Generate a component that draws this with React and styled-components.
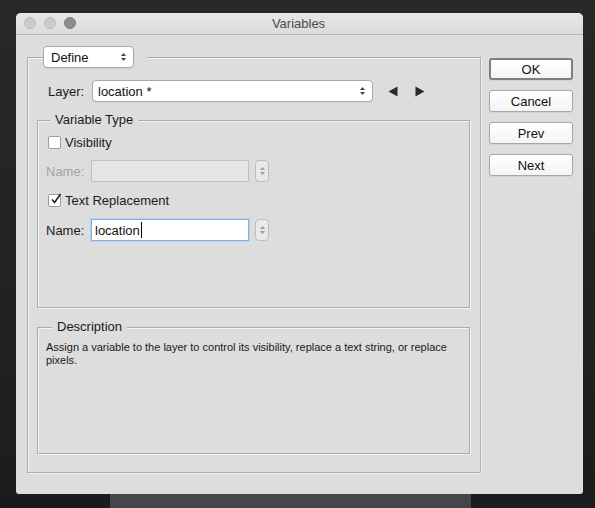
import React from "react";
import styled, { createGlobalStyle } from "styled-components";

const Global = createGlobalStyle`
  html, body { margin: 0; padding: 0; background: #252525; }
  body { font-family: "Liberation Sans", Arial, sans-serif; font-size: 13px; color: #1a1a1a; }
  * { box-sizing: border-box; }
`;

const Screen = styled.div`
  width: 595px;
  height: 508px;
  display: flex;
  flex-direction: column;
  background: linear-gradient(#282828, #222 60%, #1c1c1c);
  padding-top: 13px;
  overflow: hidden;
`;

const WindowRow = styled.div`
  display: flex;
  padding-left: 16px;
`;

const Win = styled.div`
  width: 567px;
  height: 481px;
  background: #dddddd;
  border-radius: 5px 5px 3px 3px;
  display: flex;
  flex-direction: column;
  overflow: hidden;
`;

const TitleBar = styled.div`
  height: 22px;
  flex: none;
  position: relative;
  display: flex;
  align-items: center;
  justify-content: center;
  border-bottom: 1px solid #b7b7b7;
  background: linear-gradient(#e6e6e6, #dcdcdc);
`;

const Lights = styled.div`
  position: absolute;
  left: 8px;
  top: 4px;
  display: flex;
  gap: 8px;
`;

const Light = styled.span`
  width: 12px;
  height: 12px;
  border-radius: 50%;
  background: ${(p) => (p.$dark ? "#8c8c8c" : "#cbcbcb")};
  border: 1px solid ${(p) => (p.$dark ? "#7d7d7d" : "#bdbdbd")};
`;

const Title = styled.div`
  font-size: 13px;
  color: #4a4a4a;
  margin-right: 2px;
`;

const Body = styled.div`
  display: flex;
  align-items: flex-start;
  padding: 22px 10px 0 11px;
  gap: 8px;
`;

const Group = styled.div`
  position: relative;
  border: 1px solid #ababab;
  box-shadow: inset 1px 1px 0 #f3f3f3, 1px 1px 0 #f3f3f3;
  width: ${(p) => p.$w}px;
  height: ${(p) => p.$h}px;
  padding: ${(p) => p.$pad || "0"};
  display: flex;
  flex-direction: column;
`;

const Legend = styled.div`
  position: absolute;
  left: ${(p) => p.$left}px;
  top: -9px;
  padding: 0 5px;
  background: #dddddd;
  font-size: 13px;
  line-height: 16px;
  color: #1a1a1a;
`;

const PopupWrap = styled.div`
  position: absolute;
  left: 15px;
  top: -12px;
  background: #dddddd;
  width: 104px;
  display: flex;
`;

const Popup = styled.div`
  width: ${(p) => p.$w}px;
  height: 22px;
  background: #ffffff;
  border: 1px solid #a9a9a9;
  border-radius: 4px;
  display: flex;
  align-items: center;
  justify-content: space-between;
  padding: 0 6px 0 ${(p) => p.$pl || 7}px;
  font-size: 13px;
  color: #111;
  box-shadow: 0 1px 0 rgba(0, 0, 0, 0.05);
`;

const Updown = ({ color = "#444" }) => (
  <svg width="7" height="10" viewBox="0 0 7 10">
    <path d="M3.5 1 L6 4 H1 Z" fill={color} />
    <path d="M3.5 9 L6 6 H1 Z" fill={color} />
  </svg>
);

const LayerRow = styled.div`
  display: flex;
  align-items: center;
  height: 22px;
  padding-left: 11px;
  margin-bottom: 18px;
`;

const Label = styled.span`
  font-size: 13px;
  color: ${(p) => (p.$disabled ? "#a3a3a3" : "#1a1a1a")};
  width: ${(p) => p.$w}px;
  flex: none;
`;

const Arrows = styled.div`
  display: flex;
  gap: 17px;
  margin-left: 15px;
`;

const Rows = styled.div`
  display: flex;
  flex-direction: column;
  padding: 13px 0 0 8px;
`;

const CheckRow = styled.label`
  display: flex;
  align-items: center;
  height: 16px;
  padding-left: 2px;
  margin-bottom: ${(p) => p.$mb}px;
  font-size: 13px;
`;

const Box = styled.span`
  width: 13px;
  height: 13px;
  background: #fff;
  border: 1px solid #9d9d9d;
  border-radius: 2px;
  margin-right: 4px;
  position: relative;
  display: flex;
  align-items: center;
  justify-content: center;
`;

const NameRow = styled.div`
  display: flex;
  align-items: center;
  height: 22px;
  margin-bottom: ${(p) => p.$mb}px;
`;

const Field = styled.div`
  width: 158px;
  height: 22px;
  display: flex;
  align-items: center;
  padding-left: 3px;
  font-size: 13px;
  color: #111;
  background: ${(p) => (p.$disabled ? "#e5e5e5" : "#ffffff")};
  border: 1px solid ${(p) => (p.$focus ? "#86aedb" : "#c1c1c1")};
  box-shadow: ${(p) => (p.$focus ? "0 0 0 1px #b8d1ee" : "none")};
`;

const Caret = styled.span`
  width: 1px;
  height: 16px;
  background: #000;
  margin-left: 1px;
`;

const Stepper = styled.div`
  width: 14px;
  height: 22px;
  margin-left: 6px;
  border: 1px solid #bdbdbd;
  border-radius: 4px;
  background: #e9e9e9;
  display: flex;
  align-items: center;
  justify-content: center;
`;

const Spacer = styled.div`
  height: ${(p) => p.$h}px;
  flex: none;
`;

const DescText = styled.p`
  margin: 0;
  padding: 13px 12px 0 8px;
  font-size: 11px;
  line-height: 13px;
  color: #1a1a1a;
`;

const Buttons = styled.div`
  display: flex;
  flex-direction: column;
  gap: 10px;
  margin-top: 1px;
`;

const Button = styled.button`
  width: 84px;
  height: 22px;
  padding: 0;
  font-family: "Liberation Sans", Arial, sans-serif;
  font-size: 13px;
  color: #111;
  background: linear-gradient(#ffffff, #f4f4f4);
  border: ${(p) => (p.$default ? "2px solid #7f7f7f" : "1px solid #a7a7a7")};
  border-radius: 3px;
  box-shadow: 0 1px 0 rgba(0, 0, 0, 0.06);
`;

const Strip = styled.div`
  display: flex;
  height: 14px;
`;

const StripPart = styled.div`
  width: ${(p) => p.$w}px;
  background: ${(p) => p.$c};
`;

const Tri = ({ dir }) => (
  <svg width="10" height="11" viewBox="0 0 10 11">
    {dir === "left" ? (
      <path d="M0.5 5.5 L9.5 0.5 V10.5 Z" fill="#2a2a2a" />
    ) : (
      <path d="M9.5 5.5 L0.5 0.5 V10.5 Z" fill="#2a2a2a" />
    )}
  </svg>
);

const CheckMark = styled.svg`
  position: absolute;
  left: 1px;
  top: -2px;
`;

const Check = () => (
  <CheckMark width="12" height="12" viewBox="0 0 12 12">
    <path d="M2 6.5 L4.6 9.5 L10.5 1" fill="none" stroke="#222" strokeWidth="1.6" />
  </CheckMark>
);

export default function App() {
  return (
    <>
      <Global />
      <Screen>
        <WindowRow>
          <Win>
            <TitleBar>
              <Lights>
                <Light />
                <Light />
                <Light $dark />
              </Lights>
              <Title>Variables</Title>
            </TitleBar>
            <Body>
              <Group $w={454} $h={416} $pad="22px 10px 0 9px">
                <PopupWrap>
                  <Popup $w={91}>
                    <span>Define</span>
                    <Updown />
                  </Popup>
                </PopupWrap>
                <LayerRow>
                  <Label $w={44}>Layer:</Label>
                  <Popup $w={281} $pl={5}>
                    <span>location *</span>
                    <Updown />
                  </Popup>
                  <Arrows>
                    <Tri dir="left" />
                    <Tri dir="right" />
                  </Arrows>
                </LayerRow>
                <Group $w={433} $h={188}>
                  <Legend $left={12}>Variable Type</Legend>
                  <Rows>
                    <CheckRow $mb={10}>
                      <Box />
                      Visibility
                    </CheckRow>
                    <NameRow $mb={10}>
                      <Label $w={45} $disabled>Name:</Label>
                      <Field $disabled />
                      <Stepper>
                        <Updown color="#9a9a9a" />
                      </Stepper>
                    </NameRow>
                    <CheckRow $mb={11}>
                      <Box>
                        <Check />
                      </Box>
                      Text Replacement
                    </CheckRow>
                    <NameRow $mb={0}>
                      <Label $w={45}>Name:</Label>
                      <Field $focus>
                        location
                        <Caret />
                      </Field>
                      <Stepper>
                        <Updown color="#9a9a9a" />
                      </Stepper>
                    </NameRow>
                  </Rows>
                </Group>
                <Spacer $h={19} />
                <Group $w={433} $h={127}>
                  <Legend $left={14}>Description</Legend>
                  <DescText>
                    Assign a variable to the layer to control its visibility, replace a text string, or replace
                    pixels.
                  </DescText>
                </Group>
              </Group>
              <Buttons>
                <Button $default>OK</Button>
                <Button>Cancel</Button>
                <Button>Prev</Button>
                <Button>Next</Button>
              </Buttons>
            </Body>
          </Win>
        </WindowRow>
        <Strip>
          <StripPart $w={110} $c="#1b1b1b" />
          <StripPart $w={361} $c="#45464c" />
          <StripPart $w={124} $c="#1c1c1c" />
        </Strip>
      </Screen>
    </>
  );
}
